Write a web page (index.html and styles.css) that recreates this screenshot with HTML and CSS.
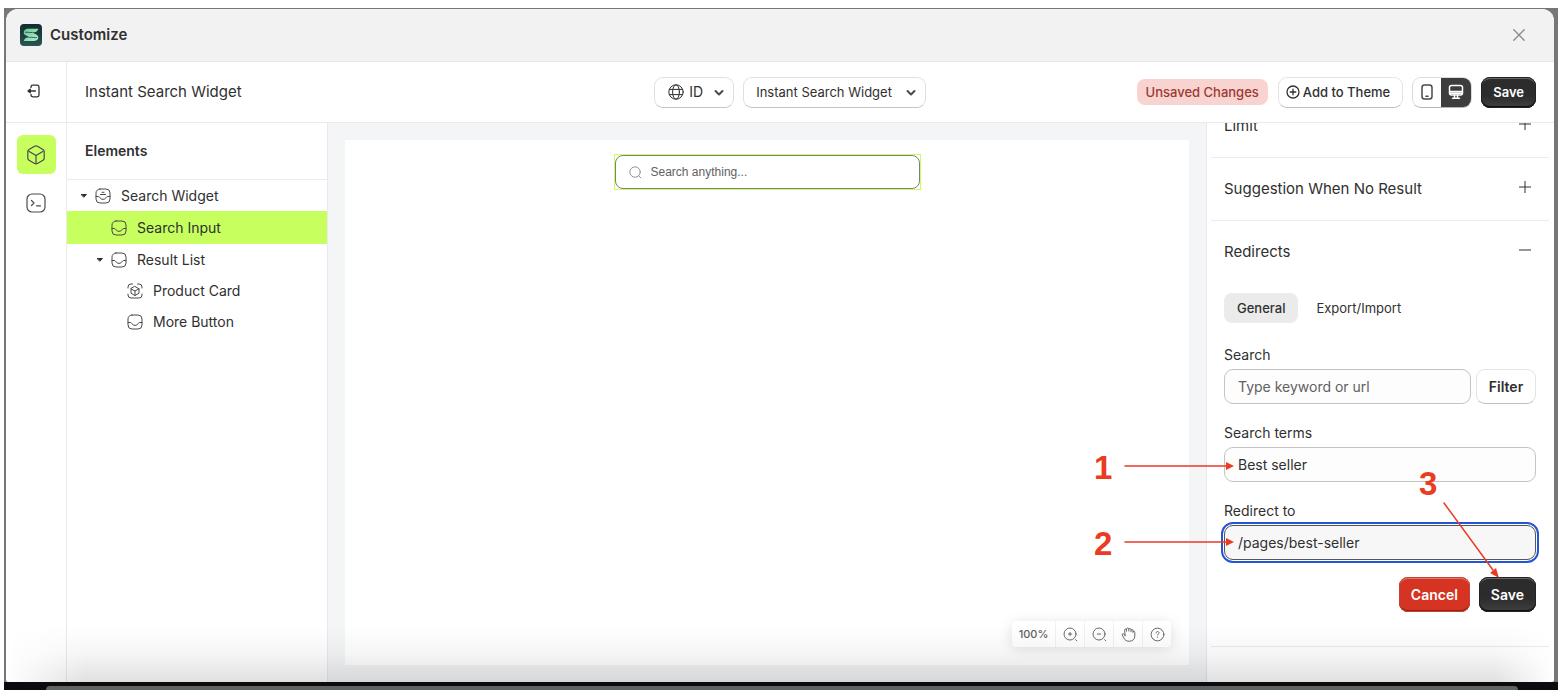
FILE: index.html
```
<!DOCTYPE html>
<html lang="en">
<head>
    <meta charset="UTF-8">
    <meta name="viewport" content="width=device-width, initial-scale=1.0">
    <title>Customize</title>
    <link rel="stylesheet" href="styles.css">
</head>
<body>
    <!-- shared icons -->
    <svg class="sprite" aria-hidden="true">
        <symbol id="inbox" viewBox="0 0 16 16">
            <rect x="1" y="1" width="14" height="14" rx="4"/>
            <path d="M1 8.500h2c1.200 0 1.800.8 2.300 1.600.5.8 1.200 1.200 2.700 1.200s2.200-.4 2.700-1.200C11.200 9.300 11.800 8.500 13 8.500h2"/>
        </symbol>
        <symbol id="chevron" viewBox="0 0 10 8">
            <path d="M1.500 2l3.500 3.500L8.500 2"/>
        </symbol>
        <symbol id="caret" viewBox="0 0 6 4">
            <path d="M.5 .5h5L3 3z"/>
        </symbol>
    </svg>

    <div class="backdrop">
        <div class="window">
            <header class="titlebar">
                <svg class="logo" viewBox="0 0 22 22" aria-hidden="true">
                    <defs>
                        <linearGradient id="logo-bg" x1="0" y1="0" x2="0" y2="1">
                            <stop offset="0" stop-color="#122b2c"/>
                            <stop offset="1" stop-color="#2a5553"/>
                        </linearGradient>
                        <linearGradient id="logo-fg" x1="0" y1="0" x2="1" y2="1">
                            <stop offset="0" stop-color="#6cc79a"/>
                            <stop offset="1" stop-color="#b0efc8"/>
                        </linearGradient>
                    </defs>
                    <rect width="22" height="22" rx="4" fill="url(#logo-bg)"/>
                    <path fill="url(#logo-fg)" d="M8 4.800h10.300c-.6 2-1.900 3.400-4 3.400l-2.300.1 4.700 2.500c2.500 1.500 1.800 4.800-.6 5.800-.7.3-1.300.4-2 .4H3.800c.6-2 1.900-3.400 4-3.400l2.200-.1-4.700-2.500C2.900 9.600 3.500 6.300 5.900 5.200 6.600 4.900 7.300 4.800 8 4.800z"/>
                    <path d="M5.500 8.300c2.500-.6 3.500.8 6.500.2M10 13.400c3-.6 4 .8 6.500.2" stroke="#1d4341" stroke-width=".8"/>
                </svg>
                <h1>Customize</h1>
                <button class="icon-button close" aria-label="Close">
                    <svg viewBox="0 0 12 12"><path d="M.8 .8l10.400 10.400M11.200 .8L.8 11.200"/></svg>
                </button>
            </header>

            <div class="toolbar">
                <div class="exit-cell">
                    <button class="icon-button exit" aria-label="Exit">
                        <svg viewBox="0 0 13 14"><path d="M4 3.500V3a1.800 1.800 0 0 1 1.800-1.800h4.400A1.800 1.800 0 0 1 12 3v8a1.800 1.800 0 0 1-1.800 1.800H5.800A1.800 1.800 0 0 1 4 11v-.5M8.500 7H1.500"/><path class="solid" d="M1 7l2.200-1.800v3.600z"/></svg>
                    </button>
                </div>
                <div class="toolbar-main">
                    <span class="page-name">Instant Search Widget</span>
                    <div class="selects">
                        <div class="select-box">
                            <svg class="globe" viewBox="0 0 16 16"><circle cx="8" cy="8" r="7.200"/><ellipse cx="8" cy="8" rx="3.400" ry="7.200"/><path d="M1.500 5.400h13M1.500 10.600h13"/></svg>
                            <select class="lang" aria-label="Language"><option>ID</option></select>
                            <svg class="chevron"><use href="#chevron"/></svg>
                        </div>
                        <div class="select-box">
                            <select class="widget" aria-label="Widget"><option>Instant Search Widget</option></select>
                            <svg class="chevron"><use href="#chevron"/></svg>
                        </div>
                    </div>
                    <div class="actions">
                        <span class="badge">Unsaved Changes</span>
                        <button class="btn btn-theme">
                            <svg viewBox="0 0 14 14"><circle cx="7" cy="7" r="6"/><path d="M7 4.200v5.600M4.200 7h5.600"/></svg>
                            Add to Theme
                        </button>
                        <div class="devices">
                            <button aria-label="Mobile">
                                <svg viewBox="0 0 16 16"><rect x="3" y="1" width="10" height="14" rx="2.500"/><path d="M7 12.300h2"/></svg>
                            </button>
                            <button class="active" aria-label="Desktop">
                                <svg viewBox="0 0 16 16"><rect x="1.500" y="1.500" width="13" height="9.500" rx="2"/><path d="M2 7.500h12M2 9.200h12M6.500 11v2.800M9.500 11v2.800M4.500 14.200h7"/></svg>
                            </button>
                        </div>
                        <button class="btn btn-dark">Save</button>
                    </div>
                </div>
            </div>

            <div class="workspace">
                <nav class="rail">
                    <button class="rail-item active" aria-label="Elements">
                        <svg viewBox="0 0 20 20"><path d="M8.600 1.300 3 4.600a2.400 2.400 0 0 0-1.200 2v6.600c0 .9.500 1.600 1.200 2l5.600 3.200c.9.500 1.900.5 2.800 0l5.600-3.200c.7-.4 1.200-1.100 1.200-2V6.600c0-.8-.5-1.600-1.200-2l-5.600-3.300a2.800 2.800 0 0 0-2.800 0zM3.200 6.500l6.800 4 6.800-4M10 10.500v8"/></svg>
                    </button>
                    <button class="rail-item" aria-label="Code">
                        <svg viewBox="0 0 20 20"><rect x="1" y="1" width="18" height="18" rx="5"/><path d="M5.500 7.500L8 10l-2.500 2.500M10.500 12.800h4"/></svg>
                    </button>
                </nav>

                <aside class="elements">
                    <h2>Elements</h2>
                    <div class="tree">
                        <button class="node level-0">
                            <svg class="caret"><use href="#caret"/></svg>
                            <svg class="node-icon" viewBox="0 0 16 16"><use href="#inbox"/><path d="M5.500 6.500h5M7 4.300h2"/></svg>
                            Search Widget
                        </button>
                        <button class="node level-1 selected">
                            <span class="caret"></span>
                            <svg class="node-icon"><use href="#inbox"/></svg>
                            Search Input
                        </button>
                        <button class="node level-1">
                            <svg class="caret"><use href="#caret"/></svg>
                            <svg class="node-icon"><use href="#inbox"/></svg>
                            Result List
                        </button>
                        <button class="node level-2">
                            <span class="caret"></span>
                            <svg class="node-icon" viewBox="0 0 16 16"><path d="M1 5V4a3 3 0 0 1 3-3h1.500M10.500 1H12a3 3 0 0 1 3 3v1M15 11v1a3 3 0 0 1-3 3H4a3 3 0 0 1-3-3v-1M8 3.500l4 2.300v4.400l-4 2.300-4-2.300V5.800zM4 5.800L8 8l4-2.200M8 8v4.500"/></svg>
                            Product Card
                        </button>
                        <button class="node level-2">
                            <span class="caret"></span>
                            <svg class="node-icon"><use href="#inbox"/></svg>
                            More Button
                        </button>
                    </div>
                </aside>

                <main class="canvas">
                    <div class="preview">
                        <label class="search-widget">
                            <svg viewBox="0 0 14 14"><circle cx="6.500" cy="6.500" r="5.600"/><path d="M10.500 10.500l2.500 2.500"/></svg>
                            <input type="search" placeholder="Search anything..." aria-label="Search anything">
                        </label>
                        <div class="zoom-bar">
                            <span class="zoom-value">100%</span>
                            <button aria-label="Zoom in"><svg viewBox="0 0 16 16"><circle cx="7.500" cy="7.500" r="6.400"/><path d="M13.500 13.500l1.200 1.200M7.500 5.800v3.400M5.800 7.500h3.400"/></svg></button>
                            <button aria-label="Zoom out"><svg viewBox="0 0 16 16"><circle cx="7.500" cy="7.500" r="6.400"/><path d="M13.500 13.500l1.200 1.200M5.800 7.500h3.400"/></svg></button>
                            <button aria-label="Pan"><svg viewBox="0 0 16 16"><path d="M4.300 7.500 3.800 3.300C3.700 2 5.500 1.800 5.800 3l.1-1c.1-1.300 2.100-1.300 2.300 0l.1.500c.2-1.300 2.200-1.200 2.300.1l.1.800c.3-1 2.100-.9 2.100.4v1c.4-.6 1.900-.5 1.900.8v4.200c0 3.200-2.300 5.400-5.900 5.400-2.900 0-4.800-1.300-5.700-3.400L1.300 8.500c-.5-1.300 1.300-1.900 2-.9l1 1.700zM5.900 3v1.500M8.300 2.800v1.500M10.700 3.500v1.500M12.800 4.800v1"/></svg></button>
                            <button aria-label="Help"><svg viewBox="0 0 16 16"><circle cx="8" cy="8" r="6.800"/><path d="M6.400 6.300c0-2.100 3.200-2 3.200 0 0 1.100-1.600 1.200-1.600 2.300M8 10.800v.3"/></svg></button>
                        </div>
                    </div>
                </main>

                <aside class="settings">
                    <section class="group scrolled">
                        <button class="group-head">Limit
                            <svg viewBox="0 0 12 12"><path d="M6 0v12M0 6h12"/></svg>
                        </button>
                    </section>
                    <section class="group">
                        <button class="group-head">Suggestion When No Result
                            <svg viewBox="0 0 12 12"><path d="M6 0v12M0 6h12"/></svg>
                        </button>
                    </section>
                    <section class="group">
                        <button class="group-head">Redirects
                            <svg viewBox="0 0 12 12"><path d="M0 6h12"/></svg>
                        </button>
                        <form class="group-body">
                            <div class="tabs">
                                <button type="button" class="tab active">General</button>
                                <button type="button" class="tab">Export/Import</button>
                            </div>
                            <div class="field">
                                <label for="search">Search</label>
                                <div class="input-row">
                                    <input id="search" type="text" placeholder="Type keyword or url">
                                    <button type="button" class="btn btn-filter">Filter</button>
                                </div>
                            </div>
                            <div class="field">
                                <label for="terms">Search terms</label>
                                <input id="terms" type="text" value="Best seller">
                            </div>
                            <div class="field">
                                <label for="redirect">Redirect to</label>
                                <input id="redirect" class="focused" type="text" value="/pages/best-seller">
                            </div>
                            <div class="form-actions">
                                <button type="button" class="btn btn-danger">Cancel</button>
                                <button type="button" class="btn btn-dark">Save</button>
                            </div>
                        </form>
                    </section>
                </aside>

                <!-- step markers pointing at the redirect form -->
                <div class="steps">
                    <svg viewBox="0 0 420 140" aria-hidden="true">
                        <path d="M31 23h102M31 99h102M350 60l49 67"/>
                        <path class="solid" d="M140 23l-8-4v8zM140 99l-8-4v8zM405 135l-9-5 6-5z"/>
                    </svg>
                    <span class="step step-1">1</span>
                    <span class="step step-2">2</span>
                    <span class="step step-3">3</span>
                </div>
            </div>
        </div>
        <div class="desktop-edge"><div class="dock"></div></div>
    </div>
</body>
</html>
```
FILE: styles.css
```
* {
    margin: 0;
    padding: 0;
    box-sizing: border-box;
}

body {
    font-family: Inter, "Liberation Sans", sans-serif;
    font-size: 14px;
    line-height: 20px;
    color: #303030;
    background: #fff;
}

button,
input,
select {
    font: inherit;
    color: inherit;
    background: none;
    border: none;
}

button {
    cursor: pointer;
}

svg {
    fill: none;
    stroke: currentColor;
    stroke-linecap: round;
    stroke-linejoin: round;
    flex: none;
}

.solid {
    fill: currentColor;
}

.sprite {
    display: none;
}

.backdrop {
    height: 100vh;
    display: flex;
    flex-direction: column;
    border-top: 8px solid #fff;
    border-left: 4px solid #fff;
    background: #777;
}

.window {
    position: relative;
    flex: 1;
    min-height: 0;
    display: flex;
    flex-direction: column;
    margin: 1px 4px 0 2px;
    background: #fff;
    border-radius: 12px 12px 2px 2px;
    overflow: hidden;
}

/* soft shade along the bottom of the window */
.window::after {
    content: "";
    position: absolute;
    inset: auto 0 0 0;
    height: 56px;
    background: linear-gradient(to bottom, rgba(0, 0, 0, 0), rgba(0, 0, 0, 0.04) 50%, rgba(0, 0, 0, 0.12));
    mask-image: linear-gradient(to right, transparent, #000 80px, #000 calc(100% - 60px), transparent);
    pointer-events: none;
}

.desktop-edge {
    height: 8px;
    padding: 4px 40px 0 42px;
    background: #0d0a10;
}

.dock {
    height: 4px;
    border-radius: 8px 8px 0 0;
    background: #5d655f;
}

/* title bar */
.titlebar {
    display: flex;
    align-items: center;
    gap: 8px;
    height: 53px;
    flex: none;
    padding: 0 29px 0 14px;
    background: #f2f2f2;
    border-bottom: 1px solid #e6e6e6;
}

.logo {
    width: 22px;
    height: 22px;
    stroke: none;
}

h1 {
    font-size: 15px;
    font-weight: 600;
}

.icon-button {
    display: flex;
}

.close {
    margin-left: auto;
    color: #8a8a8a;
}

.close svg {
    width: 12px;
    height: 12px;
    stroke-width: 1.3;
}

/* toolbar */
.toolbar {
    display: flex;
    height: 61px;
    flex: none;
    border-bottom: 1px solid #e9eaec;
}

.exit-cell {
    width: 61px;
    display: flex;
    align-items: center;
    justify-content: center;
    padding: 0 5px 3px 0;
    border-right: 1px solid #ebebeb;
}

.exit svg {
    width: 13px;
    height: 14px;
    stroke-width: 1.3;
}

.toolbar-main {
    flex: 1;
    display: grid;
    grid-template-columns: 14fr auto 15fr;
    align-items: center;
    padding: 0 18px;
}

.page-name {
    font-size: 15px;
}

.selects {
    display: flex;
    gap: 9px;
}

.select-box {
    position: relative;
    height: 31px;
}

.select-box select {
    height: 31px;
    appearance: none;
    border: 1px solid #e0e0e0;
    border-bottom-color: #c4c4c4;
    border-radius: 9px;
}

.select-box .lang {
    width: 80px;
    padding: 0 24px 0 34px;
}

.select-box .widget {
    width: 183px;
    padding: 0 24px 0 12px;
    font-size: 13px;
}

.globe {
    position: absolute;
    left: 14px;
    top: 7px;
    width: 16px;
    height: 16px;
    pointer-events: none;
}

.chevron {
    position: absolute;
    right: 10px;
    top: 12px;
    width: 10px;
    height: 8px;
    color: #4a4a4a;
    stroke-width: 2;
    pointer-events: none;
}

.actions {
    display: flex;
    align-items: center;
    justify-content: flex-end;
    gap: 9px;
}

.badge {
    margin-right: 1px;
    padding: 3px 9px;
    border-radius: 8px;
    background: #f8d3d0;
    color: #993a33;
    font-size: 13px;
    font-weight: 500;
    white-space: nowrap;
}

.btn {
    height: 31px;
    display: flex;
    align-items: center;
    justify-content: center;
    border-radius: 9px;
    font-weight: 500;
    font-size: 13px;
    white-space: nowrap;
}

.btn-theme,
.btn-filter {
    border: 1px solid #e3e3e3;
    border-bottom-color: #bdbdbd;
}

.btn-theme {
    gap: 3px;
    padding: 0 12px 0 7px;
}

.btn-theme svg {
    width: 14px;
    height: 14px;
    stroke-width: 1.3;
}

.btn-dark {
    padding: 0 12px;
    background: linear-gradient(#2c2c2c 60%, #404040);
    color: #fff;
    font-weight: 600;
    box-shadow: inset 0 0 0 1px #222, inset 0 2px 0 #666, inset 0 -2px 0 #111;
}

.btn-danger {
    padding: 0 12px;
    background: #d43421;
    color: #fff;
    font-weight: 600;
    box-shadow: inset 0 0 0 1px #c04438, inset 0 2px 0 #e07568, inset 0 -2px 0 #98200f;
}

.devices {
    display: flex;
    height: 31px;
    border: 1px solid #dcdcdc;
    border-bottom-color: #b5b5b5;
    border-radius: 9px;
    overflow: hidden;
}

.devices button {
    width: 28px;
    display: flex;
    align-items: center;
    justify-content: center;
    color: #4a4a4a;
}

.devices .active {
    width: 30px;
    background: #3d3d3d;
    color: #fff;
}

.devices svg {
    width: 16px;
    height: 16px;
    stroke-width: 1.5;
}

/* workspace */
.workspace {
    position: relative;
    flex: 1;
    min-height: 0;
    display: flex;
}

.rail {
    width: 61px;
    flex: none;
    display: flex;
    flex-direction: column;
    align-items: center;
    gap: 9px;
    padding-top: 12px;
    border-right: 1px solid #ebebeb;
}

.rail-item {
    width: 39px;
    height: 39px;
    display: flex;
    align-items: center;
    justify-content: center;
    border-radius: 6px;
    color: #4a4a4a;
}

.rail-item.active {
    background: #c6ff5e;
}

.rail-item svg {
    width: 20px;
    height: 20px;
    stroke-width: 1.2;
}

.elements {
    width: 260px;
    flex: none;
}

h2 {
    padding: 18px;
    font-size: 14px;
    font-weight: 600;
    border-bottom: 1px solid #ebebeb;
}

.tree {
    display: flex;
    flex-direction: column;
}

.node {
    height: 31px;
    display: flex;
    align-items: center;
    text-align: left;
}

.node.selected {
    height: 33px;
    background: #c6ff5e;
}

.level-0 {
    padding-left: 14px;
}

.level-1 {
    padding-left: 30px;
}

.level-2 {
    padding-left: 46px;
}

.caret {
    width: 6px;
    height: 4px;
    margin-right: 8px;
    fill: currentColor;
}

.node-icon {
    width: 16px;
    height: 16px;
    margin-right: 10px;
    color: #4a4a4a;
}

.canvas {
    flex: 1;
    min-width: 0;
    display: flex;
    padding: 17px;
    background: #f4f5f7;
    border-left: 1px solid #e9eaee;
}

.preview {
    flex: 1;
    display: flex;
    flex-direction: column;
    align-items: center;
    justify-content: space-between;
    padding: 14px 18px 18px;
    background: #fff;
}

.search-widget {
    width: 307px;
    max-width: 100%;
    height: 36px;
    display: flex;
    align-items: center;
    position: relative;
    border: 1px solid #c6ff5e;
    color: #8a8a8a;
}

.search-widget svg {
    position: absolute;
    left: 14px;
    width: 13px;
    height: 13px;
}

.search-widget input {
    width: 100%;
    height: 34px;
    padding: 0 12px 0 35px;
    border: 1px solid #7d8277;
    border-radius: 8px;
    font-family: "Liberation Sans", Arial, sans-serif;
    font-size: 12px;
}

.search-widget input::placeholder {
    color: #616161;
}

.zoom-bar {
    align-self: flex-end;
    display: flex;
    align-items: center;
    height: 26px;
    border-radius: 4px;
    background: #fff;
    box-shadow: 0 2px 14px rgba(0, 0, 0, 0.12);
    color: #616161;
}

.zoom-value {
    width: 43px;
    text-align: center;
    font-size: 11px;
    font-weight: 500;
}

.zoom-bar button {
    width: 29px;
    height: 26px;
    display: flex;
    align-items: center;
    justify-content: center;
    border-left: 1px solid #f0f0f0;
}

.zoom-bar svg {
    width: 15px;
    height: 15px;
}

/* settings panel */
.settings {
    width: 348px;
    flex: none;
    padding: 0 5px 0 4px;
    border-left: 1px solid #e3e7ee;
    overflow: hidden;
}

.group {
    border-bottom: 1px solid #ebebeb;
}

.group.scrolled {
    margin-top: -28px;
}

.group-head {
    width: 100%;
    height: 62px;
    display: flex;
    align-items: center;
    justify-content: space-between;
    padding: 0 18px 0 13px;
    text-align: left;
    font-size: 15px;
}

.group-head svg {
    width: 12px;
    height: 12px;
    margin-bottom: 5px;
}

.group-body {
    padding: 10px 13px 34px;
}

.tabs {
    display: flex;
    margin-bottom: 22px;
}

.tab {
    height: 30px;
    padding: 0 13px;
    font-size: 13px;
    border-radius: 8px;
}

.tab.active {
    margin-right: 5px;
    background: #ebebeb;
    font-weight: 500;
}

.field {
    display: flex;
    flex-direction: column;
    gap: 4px;
    margin-bottom: 19px;
}

.field input {
    width: 100%;
    height: 35px;
    padding: 0 13px;
    border: 1px solid #c4c4c4;
    border-radius: 9px;
    background: #fdfdfd;
}

.field input::placeholder {
    color: #616161;
}

.field .focused {
    background: #f7f7f7;
    border-color: #555;
    outline: 2px solid #2455d6;
    outline-offset: 1px;
}

.input-row {
    display: flex;
    gap: 5px;
}

.input-row input {
    flex: 1;
    min-width: 0;
}

.btn-filter {
    width: 60px;
    height: 35px;
    font-size: 14px;
    font-weight: 600;
}

.form-actions {
    display: flex;
    justify-content: flex-end;
    gap: 9px;
    margin-top: -2px;
}

.form-actions .btn {
    height: 35px;
    font-size: 14px;
}

/* step markers */
.steps {
    position: absolute;
    top: 320px;
    right: 40px;
    width: 420px;
    height: 140px;
    color: #ea3b23;
    pointer-events: none;
}

.steps svg {
    width: 420px;
    height: 140px;
    stroke-width: 1.5;
}

.steps .solid {
    stroke: none;
}

.step {
    position: absolute;
    font-family: "Liberation Sans", Arial, sans-serif;
    font-size: 33px;
    line-height: 36px;
    font-weight: 700;
}

.step-1 {
    left: 0;
    top: 7px;
}

.step-2 {
    left: 0;
    top: 83px;
}

.step-3 {
    left: 325px;
    top: 23px;
}
```
